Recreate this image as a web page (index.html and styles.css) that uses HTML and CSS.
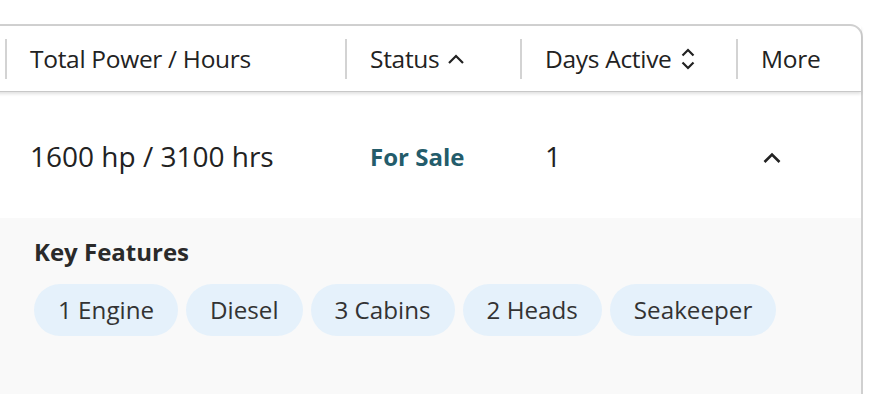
FILE: index.html
```html
<!DOCTYPE html>
<html lang="en">
<head>
    <meta charset="UTF-8">
    <meta name="viewport" content="width=device-width, initial-scale=1.0">
    <title>Listings</title>
    <link rel="stylesheet" href="styles.css">
</head>
<body>

<div class="page">
    <div class="card">
        <div class="head-row">
            <div class="th-cell"><div class="th"></div></div>
            <div class="th-cell"><div class="th">Total Power / Hours</div></div>
            <div class="th-cell">
                <div class="th">Status
                    <svg class="sort-icon" width="18" height="16" viewBox="0 0 18 16"><path d="M2 12 L9 5 L16 12" fill="none" stroke="#222" stroke-width="2.2"/></svg>
                </div>
            </div>
            <div class="th-cell">
                <div class="th">Days Active
                    <svg class="sort-icon" width="16" height="24" viewBox="0 0 16 24"><path d="M2.5 8.5 L8 3 L13.5 8.5 M2.5 15.5 L8 21 L13.5 15.5" fill="none" stroke="#222" stroke-width="2.2"/></svg>
                </div>
            </div>
            <div class="th-cell"><div class="th">More</div></div>
        </div>

        <div class="data-row">
            <div class="td"></div>
            <div class="td">1600 hp / 3100 hrs</div>
            <div class="td status">For Sale</div>
            <div class="td">1</div>
            <div class="td">
                <svg class="row-toggle" width="20" height="14" viewBox="0 0 20 14"><path d="M2.5 11 L10 3.5 L17.5 11" fill="none" stroke="#222" stroke-width="2.6"/></svg>
            </div>
        </div>

        <div class="details">
            <div class="details-title">Key Features</div>
            <div class="pills">
                <span class="pill">1 Engine</span>
                <span class="pill">Diesel</span>
                <span class="pill">3 Cabins</span>
                <span class="pill">2 Heads</span>
                <span class="pill">Seakeeper</span>
            </div>
        </div>
    </div>
</div>

</body>
</html>
```

FILE: styles.css
```css
body {
    margin: 0;
    background: #fff;
    font-family: 'Open Sans', 'Noto Sans', sans-serif;
    color: #222;
    overflow: hidden;
}

.page {
    padding-top: 24px;
}

.card {
    box-sizing: border-box;
    width: 1024px;
    margin-left: -161px;
    border: 2px solid #d0d0d0;
    border-radius: 0 13px 0 0;
    background: #fff;
    height: 420px;
}

.head-row, .data-row {
    display: grid;
    grid-template-columns: 164px 340px 175px 216px 1fr;
}

.head-row {
    height: 65px;
    align-items: center;
    border-bottom: 1px solid #c8c8c8;
    box-shadow: 0 2px 3px rgba(0, 0, 0, 0.12);
    position: relative;
    z-index: 1;
}

.th {
    display: flex;
    align-items: center;
    height: 40px;
    border-left: 2px solid #d3d3d3;
    padding-left: 23px;
    font-size: 24.5px;
    letter-spacing: -0.3px;
    white-space: nowrap;
}

.th-cell:first-child .th { border-left: none; }

.sort-icon { margin-left: 8px; }

.data-row {
    height: 126px;
    align-items: center;
}

.td {
    padding-left: 25px;
    font-size: 28px;
    white-space: nowrap;
    padding-top: 2px;
}

.row-toggle { display: block; margin: 3px 0 0 1px; }

.status {
    color: #245c6b;
    font-weight: bold;
    font-size: 24px;
}

.details {
    background: #f9f9f9;
    padding: 17px 0 0 193px;
    height: 200px;
}

.details-title {
    font-weight: bold;
    font-size: 24px;
    color: #2a2a2a;
    margin-bottom: 16px;
}

.pills {
    display: flex;
    gap: 8px;
}

.pill {
    background: #e5f1fb;
    border-radius: 26px;
    padding: 0 24px;
    height: 52px;
    line-height: 52px;
    font-size: 24.2px;
    color: #333;
}
```
